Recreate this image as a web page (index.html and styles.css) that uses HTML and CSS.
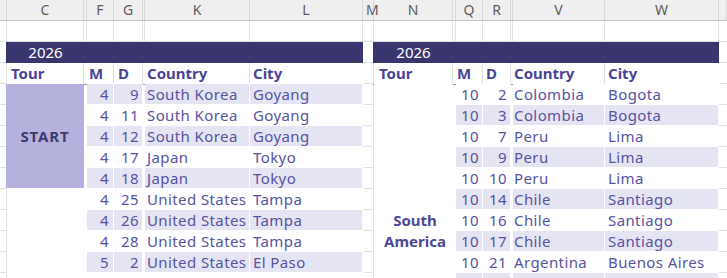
FILE: index.html
```html
<!DOCTYPE html>
<html>
<head>
<meta charset="utf-8">
<link rel="stylesheet" href="styles.css">
</head>
<body>
<div class="colheads">
  <div class="ch"></div>
  <div class="ch">C</div>
  <div class="ch"></div>
  <div class="ch">F</div>
  <div class="ch">G</div>
  <div class="ch"></div>
  <div class="ch">K</div>
  <div class="ch">L</div>
  <div class="ch ch-m">M</div>
  <div class="ch">N</div>
  <div class="ch"></div>
  <div class="ch">Q</div>
  <div class="ch">R</div>
  <div class="ch"></div>
  <div class="ch">V</div>
  <div class="ch">W</div>
  <div class="ch"></div>
</div>
<div class="sheet">
  <!-- left table -->
  <div class="tbl-bg left"></div>
  <div class="band left"></div>
  <div class="year left-year">2026</div>
  <div class="hdr-line left"></div>
  <div class="th col-c">Tour</div>
  <div class="th col-f">M</div>
  <div class="th col-g">D</div>
  <div class="th col-k">Country</div>
  <div class="th col-l">City</div>
  <div class="group start">START</div>
  <div class="group blank-left"></div>
  <div class="data ldata">
    <div class="row sh"><div class="num">4</div><div class="num">9</div><div class="txt country">South Korea</div><div class="txt city">Goyang</div></div>
    <div class="row"><div class="num">4</div><div class="num">11</div><div class="txt country">South Korea</div><div class="txt city">Goyang</div></div>
    <div class="row sh"><div class="num">4</div><div class="num">12</div><div class="txt country">South Korea</div><div class="txt city">Goyang</div></div>
    <div class="row"><div class="num">4</div><div class="num">17</div><div class="txt country">Japan</div><div class="txt city">Tokyo</div></div>
    <div class="row sh"><div class="num">4</div><div class="num">18</div><div class="txt country">Japan</div><div class="txt city">Tokyo</div></div>
    <div class="row"><div class="num">4</div><div class="num">25</div><div class="txt country">United States</div><div class="txt city">Tampa</div></div>
    <div class="row sh"><div class="num">4</div><div class="num">26</div><div class="txt country">United States</div><div class="txt city">Tampa</div></div>
    <div class="row"><div class="num">4</div><div class="num">28</div><div class="txt country">United States</div><div class="txt city">Tampa</div></div>
    <div class="row sh"><div class="num">5</div><div class="num">2</div><div class="txt country">United States</div><div class="txt city">El Paso</div></div>
    <div class="row"><div class="num"></div><div class="num"></div><div class="txt country"></div><div class="txt city"></div></div>
  </div>

  <!-- right table -->
  <div class="tbl-bg right"></div>
  <div class="band right"></div>
  <div class="year right-year">2026</div>
  <div class="hdr-line right"></div>
  <div class="th col-n">Tour</div>
  <div class="th col-q">M</div>
  <div class="th col-r">D</div>
  <div class="th col-v">Country</div>
  <div class="th col-w">City</div>
  <div class="group south">South<br>America</div>
  <div class="data rdata">
    <div class="row"><div class="num">10</div><div class="num">2</div><div class="txt country">Colombia</div><div class="txt city">Bogota</div></div>
    <div class="row sh"><div class="num">10</div><div class="num">3</div><div class="txt country">Colombia</div><div class="txt city">Bogota</div></div>
    <div class="row"><div class="num">10</div><div class="num">7</div><div class="txt country">Peru</div><div class="txt city">Lima</div></div>
    <div class="row sh"><div class="num">10</div><div class="num">9</div><div class="txt country">Peru</div><div class="txt city">Lima</div></div>
    <div class="row"><div class="num">10</div><div class="num">10</div><div class="txt country">Peru</div><div class="txt city">Lima</div></div>
    <div class="row sh"><div class="num">10</div><div class="num">14</div><div class="txt country">Chile</div><div class="txt city">Santiago</div></div>
    <div class="row"><div class="num">10</div><div class="num">16</div><div class="txt country">Chile</div><div class="txt city">Santiago</div></div>
    <div class="row sh"><div class="num">10</div><div class="num">17</div><div class="txt country">Chile</div><div class="txt city">Santiago</div></div>
    <div class="row"><div class="num">10</div><div class="num">21</div><div class="txt country">Argentina</div><div class="txt city">Buenos Aires</div></div>
    <div class="row sh"><div class="num"></div><div class="num"></div><div class="txt country"></div><div class="txt city"></div></div>
  </div>
</div>
</body>
</html>
```
FILE: styles.css
```css
html, body {
  margin: 0;
  padding: 0;
  width: 727px;
  height: 278px;
  overflow: hidden;
  background: #fff;
  font-family: "Noto Sans", "Open Sans", sans-serif;
}

.colheads,
.sheet {
  display: grid;
  grid-template-columns: 7px 77px 3px 27px 29px 2px 105px 113px 11px 79px 3px 27px 28px 2px 92px 114px 8px;
}

.colheads {
  height: 20px;
  background: #efefef;
  border-bottom: 1px solid #c4c4c4;
}

.ch {
  box-sizing: border-box;
  border-right: 1px solid #d9d9d9;
  color: #5c5c5c;
  font-size: 14px;
  line-height: 20px;
  text-align: center;
  overflow: hidden;
  white-space: nowrap;
}

.ch-m {
  text-indent: 3px;
  overflow: visible;
}

.sheet {
  height: 257px;
  overflow: hidden;
  grid-template-rows: repeat(17, 21px);
  background:
    linear-gradient(#e1e1e1, #e1e1e1) 6px 0 / 1px 100% no-repeat,
    linear-gradient(#e1e1e1, #e1e1e1) 83px 0 / 1px 100% no-repeat,
    linear-gradient(#e1e1e1, #e1e1e1) 86px 0 / 1px 100% no-repeat,
    linear-gradient(#e1e1e1, #e1e1e1) 113px 0 / 1px 100% no-repeat,
    linear-gradient(#e1e1e1, #e1e1e1) 142px 0 / 1px 100% no-repeat,
    linear-gradient(#e1e1e1, #e1e1e1) 144px 0 / 1px 100% no-repeat,
    linear-gradient(#e1e1e1, #e1e1e1) 249px 0 / 1px 100% no-repeat,
    linear-gradient(#e1e1e1, #e1e1e1) 362px 0 / 1px 100% no-repeat,
    linear-gradient(#e1e1e1, #e1e1e1) 373px 0 / 1px 100% no-repeat,
    linear-gradient(#e1e1e1, #e1e1e1) 452px 0 / 1px 100% no-repeat,
    linear-gradient(#e1e1e1, #e1e1e1) 455px 0 / 1px 100% no-repeat,
    linear-gradient(#e1e1e1, #e1e1e1) 482px 0 / 1px 100% no-repeat,
    linear-gradient(#e1e1e1, #e1e1e1) 510px 0 / 1px 100% no-repeat,
    linear-gradient(#e1e1e1, #e1e1e1) 512px 0 / 1px 100% no-repeat,
    linear-gradient(#e1e1e1, #e1e1e1) 604px 0 / 1px 100% no-repeat,
    linear-gradient(#e1e1e1, #e1e1e1) 718px 0 / 1px 100% no-repeat,
    repeating-linear-gradient(to bottom, #fff 0 20px, #e1e1e1 20px 21px);
}

/* table areas */
.tbl-bg {
  grid-row: 2 / 18;
  background: #fff;
}
.tbl-bg.left { grid-column: 2 / 9; }
.tbl-bg.right { grid-column: 10 / 17; }

.band {
  grid-row: 2;
  background: #39356f;
  margin-left: -1px;
}
.band.left { grid-column: 2 / 9; }
.band.right { grid-column: 10 / 17; }

.year {
  grid-row: 2;
  color: #fff;
  font-size: 15px;
  line-height: 21px;
  text-align: center;
}
.left-year { grid-column: 2; }
.right-year { grid-column: 10; }

.hdr-line {
  grid-row: 3;
  border-bottom: 1px solid #8985c0;
  margin-left: -1px;
  margin-bottom: -1px;
}
.hdr-line.left { grid-column: 2 / 9; }
.hdr-line.right { grid-column: 10 / 17; }

.th {
  grid-row: 3;
  box-sizing: border-box;
  border-right: 1px solid #dedede;
  color: #4a4496;
  font-weight: 700;
  font-size: 15px;
  line-height: 21px;
  white-space: nowrap;
  padding-left: 2px;
}
.col-c { grid-column: 2; padding-left: 4px; }
.col-f { grid-column: 4; padding-left: 2px; }
.col-g { grid-column: 5; padding-left: 4px; }
.col-k { grid-column: 7; padding-left: 2px; }
.col-l { grid-column: 8; padding-left: 3px; border-right: none; }
.col-n { grid-column: 10; padding-left: 5px; }
.col-q { grid-column: 12; padding-left: 1px; }
.col-r { grid-column: 13; padding-left: 3px; }
.col-v { grid-column: 15; padding-left: 1px; }
.col-w { grid-column: 16; padding-left: 3px; border-right: none; }

/* merged group cells */
.group {
  display: flex;
  align-items: center;
  justify-content: center;
  text-align: center;
  font-weight: 700;
  font-size: 15px;
  line-height: 21px;
}
.start {
  grid-column: 2;
  grid-row: 4 / 9;
  margin-left: -1px;
  margin-bottom: 1px;
  background: #b4b1dc;
  color: #3d3a6e;
  letter-spacing: 0.9px;
}
.blank-left {
  grid-column: 2;
  grid-row: 9 / 18;
  background: #fff;
}
.south {
  grid-column: 10;
  grid-row: 4 / 18;
  background: #fff;
  color: #4d4896;
  padding-left: 3px;
}

/* data blocks */
.data {
  display: grid;
  grid-auto-rows: 21px;
  grid-row: 4 / 14;
}
.ldata {
  grid-column: 4 / 9;
  grid-template-columns: 27px 29px 2px 105px 113px;
}
.rdata {
  grid-column: 12 / 17;
  grid-template-columns: 27px 28px 2px 92px 114px;
}

.row { display: contents; }

.row > div {
  box-sizing: border-box;
  border-right: 1px solid #fff;
  border-bottom: 1px solid #fff;
  background: #fff;
  color: #5753a1;
  font-size: 15px;
  line-height: 20px;
  white-space: nowrap;
  letter-spacing: 0.4px;
}
.row.sh > div { background: #e5e4f3; }

.num {
  text-align: right;
  padding-right: 3px;
}
.ldata .num:first-child { padding-right: 4px; }

.country { grid-column: 4; padding-left: 2px; }
.city { padding-left: 3px; }
.rdata .country { padding-left: 1px; }
.rdata .city { padding-left: 3px; }
```
